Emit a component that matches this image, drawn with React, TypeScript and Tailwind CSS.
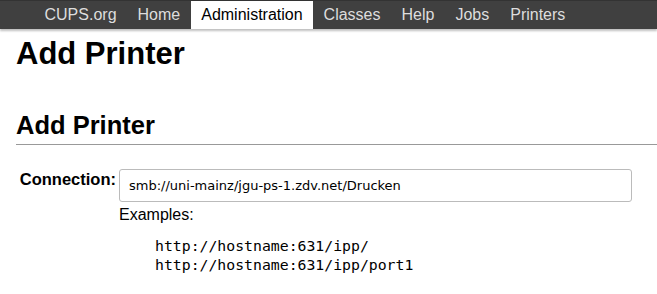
const navItems = ["CUPS.org", "Home", "Administration", "Classes", "Help", "Jobs", "Printers"];

export default function App() {
  return (
    <div className="w-[657px] h-[294px] overflow-hidden bg-white font-['Liberation_Sans',Arial,sans-serif] text-black">
      {/* Top navigation */}
      <nav className="relative z-10 h-[29px] bg-[#404040] border-t border-[#333] shadow-[0_2px_2px_rgba(0,0,0,0.25)] flex pl-[34px]">
        {navItems.map(item => (
          <a
            key={item}
            className={
              item === "Administration"
                ? "px-[10.5px] h-full flex items-center text-[16px] bg-white text-black"
                : "px-[10.5px] h-full flex items-center text-[16px] text-[#dddddd]"
            }
          >
            {item}
          </a>
        ))}
      </nav>

      <div className="px-4">
        <h1 className="mt-[7px] text-[31px] leading-[36px] font-bold">Add Printer</h1>

        <h2 className="mt-[38px] text-[25.5px] leading-[30px] font-bold border-b border-[#999] pb-[4px] -mr-4">Add Printer</h2>

        {/* Form row */}
        <div className="mt-[24px] flex">
          <div className="w-[100px] text-right pt-[1px] text-[16.5px] leading-[18px] font-bold">Connection:</div>
          <div className="ml-[3px] flex flex-col">
            <div className="w-[513px] h-[33px] border border-[#bbb] rounded-[3px] flex items-center px-[9px] font-['DejaVu_Sans',sans-serif] text-[13px]">
              smb://uni-mainz/jgu-ps-1.zdv.net/Drucken
            </div>
            <div className="mt-[4px] text-[16px] leading-[18px]">Examples:</div>
            <pre className="mt-[12px] ml-[36px] font-['DejaVu_Sans_Mono',monospace] text-[14.8px] leading-[19px]">
              {"http://hostname:631/ipp/\nhttp://hostname:631/ipp/port1"}
            </pre>
          </div>
        </div>
      </div>
    </div>
  );
}
